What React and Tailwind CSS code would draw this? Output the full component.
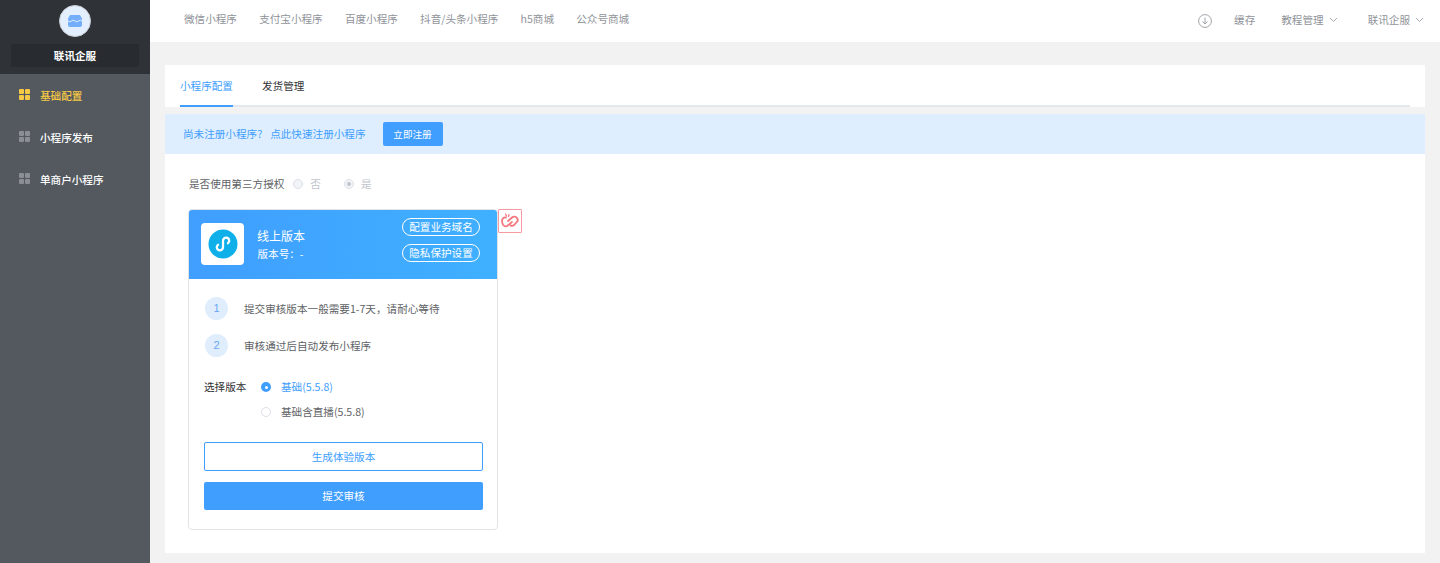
import React from "react";

function Grid({ active }) {
  const c = active ? "bg-[#f8c945]" : "bg-[#8b8f94]";
  return (
    <span className="grid grid-cols-2 gap-[1px] w-[11px] h-[11px] -mt-[3px]">
      <i className={`${c} block rounded-[1px]`} /><i className={`${c} block rounded-[1px]`} /><i className={`${c} block rounded-[1px]`} /><i className={`${c} block rounded-[1px]`} />
    </span>
  );
}

function MenuItem({ label, active }) {
  return (
    <div className={`flex items-center h-[42px] pl-[19px] gap-[10px] text-[10.6px] font-medium ${active ? "text-[#f8c945]" : "text-white"}`}>
      <Grid active={active} />
      <span>{label}</span>
    </div>
  );
}

function Chevron() {
  return (
    <svg width="9" height="6" viewBox="0 0 9 6" fill="none" stroke="#a8abb2" strokeWidth="1"><path d="M1 1l3.5 3.5L8 1" /></svg>
  );
}

function Step({ n, text }) {
  return (
    <div className="flex items-center h-[23px] gap-[16px] text-[10.6px] text-[#606266]">
      <span className="w-[23px] h-[23px] rounded-full bg-[#e0edfd] text-[#6ba6f5] text-[11px] font-['Liberation_Sans',sans-serif] flex items-center justify-center">{n}</span>
      <span>{text}</span>
    </div>
  );
}

export default function App() {
  return (
    <div className="flex w-[1440px] h-[563px] overflow-hidden bg-[#f2f2f2] text-[10.6px] font-['Noto_Sans_CJK_SC','Noto_Sans',sans-serif]">
      <aside className="w-[150px] shrink-0 bg-[#53595f] flex flex-col">
        <div className="h-[74px] bg-[#2f3337] flex flex-col items-center pt-[5px]">
          <div className="w-[32px] h-[32px] rounded-full bg-[#e3efff] border border-[#c9ccd0] flex items-center justify-center">
            <svg width="14" height="12" viewBox="0 0 14 12"><path d="M2 0h10l2 3.5V10a2 2 0 0 1-2 2H2a2 2 0 0 1-2-2V3.5z" fill="#74aefa" /><path d="M0 6q1.7 1.6 3.5 0t3.5 0 3.500 0T14 6" fill="none" stroke="#e3efff" strokeWidth="1" /></svg>
          </div>
          <div className="mt-[7px] w-[128px] h-[23px] rounded-[2px] bg-[#282b2f] flex items-center justify-center text-white font-bold text-[10.6px]">联讯企服</div>
        </div>
        <div className="pt-[1px]">
          <MenuItem label="基础配置" active />
          <MenuItem label="小程序发布" />
          <MenuItem label="单商户小程序" />
        </div>
      </aside>
      <div className="flex-1 flex flex-col min-w-0">
        <header className="h-[42px] bg-white flex items-center justify-between pl-[34px] pr-[16px] text-[#909399] shrink-0">
          <nav className="flex gap-[22.2px] pb-[4px]">
            <span>微信小程序</span><span>支付宝小程序</span><span>百度小程序</span><span>抖音/头条小程序</span><span>h5商城</span><span>公众号商城</span>
          </nav>
          <div className="flex items-center pb-[3px]">
            <svg width="14" height="14" viewBox="0 0 14 14" fill="none" stroke="#a0a3a8" strokeWidth="1" className="mr-[22px] mt-[3px]"><circle cx="7" cy="7" r="6.4" /><path d="M7 3.500v6.500M4.500 7.500l2.500 2.500 2.500-2.500" /></svg>
            <span className="mr-[26px]">缓存</span>
            <span className="mr-[5px]">教程管理</span>
            <Chevron />
            <span className="ml-[30px] mr-[5px]">联讯企服</span>
            <Chevron />
          </div>
        </header>
        <main className="pt-[23px] pl-[15px] pr-[15px] flex flex-col">
          <div className="h-[42px] bg-white px-[15px] relative flex items-start gap-[29px] shrink-0">
            <div className="absolute left-[15px] right-[15px] bottom-0 h-[2px] bg-[#e4e7ed]" />
            <div className="relative h-[42px] pt-[13px] text-[#409eff] border-b-2 border-[#409eff] leading-[16px]">小程序配置</div>
            <div className="pt-[13px] text-[#303133] leading-[16px]">发货管理</div>
          </div>
          <div className="mt-[7px] bg-white h-[439px]">
            <div className="h-[40px] bg-[#dfeefe] flex items-center pl-[18px] text-[#409eff]">
              <span>尚未注册小程序?</span>
              <span className="ml-[8px]">点此快速注册小程序</span>
              <button className="ml-[17px] w-[60px] h-[24px] bg-[#409eff] text-white rounded-[2px] text-[9.6px]">立即注册</button>
            </div>
            <div className="flex items-center mt-[22px] ml-[24px] h-[16px] text-[#606266]">
              <span>是否使用第三方授权</span>
              <span className="ml-[9px] w-[10px] h-[10px] rounded-full border border-[#dcdfe6] bg-[#f2f4f8]" />
              <span className="ml-[7px] text-[#c0c4cc]">否</span>
              <span className="ml-[23px] w-[10px] h-[10px] rounded-full border border-[#dcdfe6] bg-[#f2f4f8] flex items-center justify-center"><i className="block w-[4px] h-[4px] rounded-full bg-[#c0c4cc]" /></span>
              <span className="ml-[7px] text-[#c0c4cc]">是</span>
            </div>
            <div className="flex items-start mt-[17px] ml-[23px]">
              <div className="w-[310px] h-[321px] rounded-[4px] border border-[#e1e3e6] overflow-hidden flex flex-col">
                <div className="h-[70px] -mx-[1px] -mt-[1px] bg-gradient-to-r from-[#409eff] to-[#3fb0ff] flex items-center pl-[13px] pr-[18px] text-white shrink-0">
                  <div className="w-[43px] h-[42px] bg-white rounded-[4px] flex items-center justify-center">
                    <svg width="30" height="30" viewBox="0 0 30 30"><circle cx="15" cy="15" r="14.500" fill="#0fb0ea" /><path d="M10 15.800A3.100 3.100 0 1 0 15 18V12A3.100 3.100 0 1 1 20 14.200" fill="none" stroke="#fff" strokeWidth="2.300" strokeLinecap="round" /></svg>
                  </div>
                  <div className="ml-[13px] flex flex-col gap-[1px] pt-[1px]">
                    <span className="text-[12px] leading-[18px]">线上版本</span>
                    <span className="text-[10.6px] leading-[16px] pl-[0.5px]">版本号：-</span>
                  </div>
                  <div className="ml-auto flex flex-col gap-[8px] -mt-[8px] pb-0">
                    <span className="w-[78px] h-[18px] rounded-full border border-white flex items-center justify-center text-[10.6px]">配置业务域名</span>
                    <span className="w-[78px] h-[18px] rounded-full border border-white flex items-center justify-center text-[10.6px]">隐私保护设置</span>
                  </div>
                </div>
                <div className="pl-[15px] pr-[14px] pt-[18px] flex flex-col">
                  <div className="pl-[1px] flex flex-col gap-[14px]">
                    <Step n="1" text="提交审核版本一般需要1-7天，请耐心等待" />
                    <Step n="2" text="审核通过后自动发布小程序" />
                  </div>
                  <div className="flex mt-[22px]">
                    <span className="w-[57px] text-[#303133] leading-[16px]">选择版本</span>
                    <div className="flex flex-col gap-[9px]">
                      <div className="flex items-center h-[16px] text-[#409eff]">
                        <span className="w-[10px] h-[10px] rounded-full bg-[#409eff] flex items-center justify-center"><i className="block w-[3px] h-[3px] rounded-full bg-white" /></span>
                        <span className="ml-[10px]">基础(5.5.8)</span>
                      </div>
                      <div className="flex items-center h-[16px] text-[#606266]">
                        <span className="w-[10px] h-[10px] rounded-full border border-[#dcdfe6]" />
                        <span className="ml-[10px]">基础含直播(5.5.8)</span>
                      </div>
                    </div>
                  </div>
                  <button className="mt-[22px] h-[29px] rounded-[2px] border border-[#409eff] text-[#409eff] bg-white text-[10.6px]">生成体验版本</button>
                  <button className="mt-[11px] h-[28px] rounded-[2px] bg-[#409eff] text-white text-[10.6px]">提交审核</button>
                </div>
              </div>
              <div className="w-[24px] h-[24px] border border-[#f59aa0] rounded-[1px] flex items-center justify-center bg-white">
                <svg width="20" height="16" viewBox="0 0 20 16" fill="none" stroke="#f5787f" strokeWidth="1.800" strokeLinecap="round"><path d="M6 4.500A3.300 3.300 0 0 0 2 8l.5 2.500a3.200 3.200 0 0 0 5 2.200L12 9" /><path d="M8 8l4-3.500a3.200 3.200 0 0 1 5 .6 3.200 3.200 0 0 1-.6 4.400l-2.400 2.500a3 3 0 0 1-3.500.4" /><path d="M5.500 1l1 2M9 1.500l-.5 2" strokeWidth="1.200" /></svg>
              </div>
            </div>
          </div>
        </main>
      </div>
    </div>
  );
}
